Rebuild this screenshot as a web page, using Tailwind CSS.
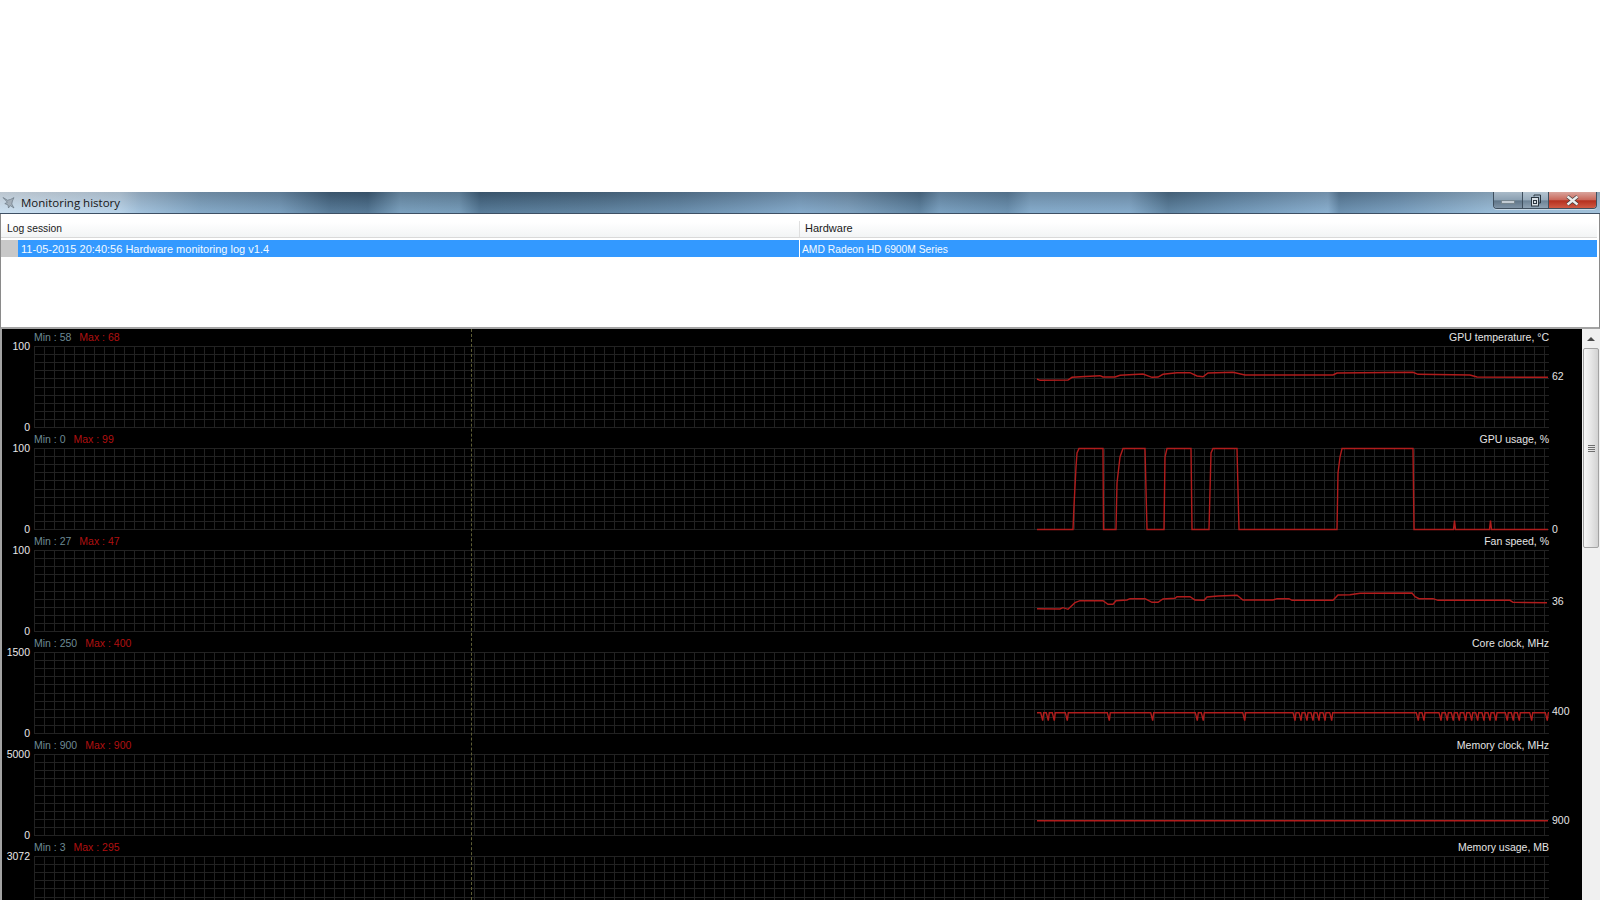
<!DOCTYPE html>
<html lang="en">
<head>
  <meta charset="UTF-8" />
  <meta name="viewport" content="width=device-width, initial-scale=1.0" />
  <title>Monitoring history</title>
  <script src="https://cdn.jsdelivr.net/npm/@tailwindcss/browser@4"></script>
</head>
<body class="bg-white h-[900px] overflow-hidden flex flex-col font-['Liberation_Sans',sans-serif] text-[10.5px]">
  <div class="h-[192px] shrink-0"></div>

  <!-- Title bar -->
  <header class="relative h-[22px] shrink-0 flex items-center border-b border-[#3e5064] bg-[linear-gradient(to_bottom,rgba(40,60,80,0.22),rgba(150,200,240,0.32)),linear-gradient(to_right,#e6edf3_0%,#c8d8e6_7.5%,#a8bfd3_8.8%,#7f9db6_12.5%,#6d8ca7_17.5%,#3f5b73_20.6%,#3a566e_23%,#6f8fa8_25%,#6a8aa3_28.7%,#3d5a72_30%,#4a677f_37.5%,#587690_42.5%,#7d9dba_50%,#7793ac_53%,#4c6a83_57.5%,#6f90ac_58.7%,#5d7d98_63%,#7fa0bc_64.4%,#7f9fbb_70.6%,#4a6880_73%,#6384a0_77%,#86a6c2_83%,#5b7a95_83.7%,#6f8fab_87.5%,#9ab6cc_93%,#a9c0d2_100%)]">
    <svg class="ml-[2px] mr-[6px] w-[13px] h-[13px]" viewBox="0 0 13 13" aria-hidden="true">
      <path d="M1 1.5 5.5 4.2 8.6 3.4 12 1.6 10.4 5 9.8 8 12 12 8.2 9.6 6.5 12 6 9 2.8 7.6 5.4 6.3Z" fill="#a3aeb8" stroke="#5f6d78" stroke-width=".6"/>
    </svg>
    <h1 class="font-['Open_Sans',sans-serif] text-[11.5px] text-[#161616]">Monitoring history</h1>

    <!-- Caption buttons -->
    <div class="absolute right-[3px] top-0 h-[17px] flex border border-t-0 border-[#3f4f5e] rounded-b-[4px] overflow-hidden shadow-[0_1px_0_rgba(255,255,255,0.45)]">
      <div class="w-[29px] flex items-center justify-center border-r border-[#3f4f5e] bg-[linear-gradient(to_bottom,#a9bac8,#8ba0b2_50%,#5f7588_55%,#7f93a5)]">
        <span class="w-[14px] h-[4px] mt-[3px] bg-[#c3ccd4] border border-[#77868f]"></span>
      </div>
      <div class="w-[26px] flex items-center justify-center border-r border-[#3f4f5e] bg-[linear-gradient(to_bottom,#b4c4d1,#98acbd_50%,#6d8396_55%,#8ea2b3)]">
        <svg class="w-[12px] h-[13px]" viewBox="0 0 12 13" aria-hidden="true">
          <path d="M4 2.5V1h6.5v8H9" fill="none" stroke="#2b3640"/>
          <rect x="1.5" y="3.5" width="7" height="8.5" fill="#d8dfe5" stroke="#2b3640"/>
          <rect x="3.5" y="6.5" width="3" height="3" fill="none" stroke="#2b3640"/>
        </svg>
      </div>
      <div class="w-[47px] flex items-center justify-center bg-[linear-gradient(to_bottom,#d9a49c,#c9695c_48%,#b5301f_55%,#cf5a44)]">
        <svg class="w-[13px] h-[11px]" viewBox="0 0 13 11" aria-hidden="true">
          <path d="M1.5 1.5 11.5 9.5M11.5 1.5 1.5 9.5" stroke="#3a3a3a" stroke-width="3.6"/>
          <path d="M1.5 1.5 11.5 9.5M11.5 1.5 1.5 9.5" stroke="#ececec" stroke-width="2.4"/>
        </svg>
      </div>
    </div>
  </header>

  <!-- Session list -->
  <section class="h-[115px] shrink-0 flex flex-col bg-white border-x border-[#8a8a8a] border-b-2 border-b-[#a3a3a3] pt-[8px] pr-[2px] text-[#1a1a1a]">
    <div class="h-[14px] flex items-center border-b border-[#d9d9d9] bg-[linear-gradient(to_bottom,#ffffff,#f2f4f5)] box-content pb-[1px]">
      <div class="w-[799px] pl-[6px] border-r border-[#dfdfdf] text-[10.3px]">Log session</div>
      <div class="pl-[5px] -mt-[1px] text-[11px]">Hardware</div>
    </div>
    <div class="mt-[2px] h-[17px] flex text-white">
      <div class="w-[17px] bg-[#c8c8c8]"></div>
      <div class="w-[782px] pl-[3px] pt-[1px] bg-[#3399ff] border-r border-white leading-[17px] text-[#f4f9ff] text-[11px]">11-05-2015 20:40:56 Hardware monitoring log v1.4</div>
      <div class="flex-1 pl-[2px] pt-[1px] bg-[#3399ff] leading-[17px] text-[#f4f9ff] text-[10.3px]">AMD Radeon HD 6900M Series</div>
    </div>
  </section>

  <!-- Graphs + scrollbar -->
  <div class="flex-1 min-h-0 flex overflow-hidden">
    <main id="graphs" class="relative w-[1582px] shrink-0 bg-black border-l-2 border-[#a3a3a3] overflow-hidden">
      <!-- history cursor -->
      <div class="absolute left-[469px] top-0 bottom-0 border-l border-dashed border-[#5c5c34] z-10"></div>
    </main>
    <aside class="flex-1 bg-[#f0f0f0] flex flex-col items-stretch">
      <div class="h-[19px] flex items-center justify-center">
        <span class="w-0 h-0 border-x-[4px] border-x-transparent border-b-[4px] border-b-[#4a4a4a]"></span>
      </div>
      <div class="h-[200px] mx-[1px] flex items-center justify-center rounded-[2px] border border-[#a3a3a3] bg-[linear-gradient(to_right,#f6f6f6,#e6e6e6_50%,#d2d2d2)]">
        <div class="flex flex-col gap-[1px]">
          <span class="block w-[7px] h-[1px] bg-[#6e6e6e]"></span>
          <span class="block w-[7px] h-[1px] bg-[#6e6e6e]"></span>
          <span class="block w-[7px] h-[1px] bg-[#6e6e6e]"></span>
          <span class="block w-[7px] h-[1px] bg-[#6e6e6e]"></span>
        </div>
      </div>
    </aside>
  </div>

  <script>
  // core clock drops a few pixels on every sample listed here
  const coreDips = [1042.7,1048.3,1054.3,1067.3,1109.3,1152.7,1197.3,1203.3,1244.7,1295,1301,1307,1313,1319,1325,1331.7,1418.3,1424,1441,1447.3,1453.3,1459.3,1465.7,1471.7,1477.7,1484,1490,1496,1507.3,1513.3,1519.3,1531.7,1547.3];
  let corePts = '1037,712.7';
  coreDips.forEach(x => {
    corePts += ` ${x - 2},712.7 ${x},720.7 ${x + 1},712.7`;
  });
  corePts += ' 1548,712.7';

  const rows = [
    { name: 'GPU temperature, °C', min: 58, max: 68, top: 100, value: 62, valueY: 377,
      points: '1037,379 1040,380.3 1068,380 1072,377.3 1085,376.5 1100,375.7 1103,377 1115,377 1120,375.3 1143,374 1152,377.3 1158,377 1163,374.3 1177,372.7 1190,372.7 1197,376 1203,376.7 1208,373 1233,372.3 1245,375 1333,375 1337,373 1413,372.3 1418,374.3 1470,375 1477,377 1548,377.3' },
    { name: 'GPU usage, %', min: 0, max: 99, top: 100, value: 0, valueY: 530,
      points: '1037,529.5 1073,529.5 1074,506 1076,467 1077,453 1079,448.5 1103,448.5 1103.5,529.5 1116,529.5 1117,483 1120,457 1123,448.5 1145,448.5 1146,490 1147,529.5 1164,529.5 1165,457 1167,448.5 1191,448.5 1192,529.5 1209,529.5 1211,453 1213,448.5 1237,448.5 1238,490 1239,529.5 1337,529.5 1338,473 1340,457 1342,448.5 1413,448.5 1414,529.5 1453.5,529.5 1454.5,520.5 1455.5,529.5 1489.5,529.5 1490.5,520.5 1491.5,529.5 1548,529.5' },
    { name: 'Fan speed, %', min: 27, max: 47, top: 100, value: 36, valueY: 602,
      points: '1037,608.7 1060,609 1063,607.7 1068,609.3 1075,602.7 1080,600.7 1103,600.7 1108,604.3 1113,604.3 1116,600.7 1127,600 1130,598.7 1145,598.7 1152,602.3 1158,602.3 1163,599 1175,598.3 1177,596.7 1190,596.7 1195,600 1204,600.3 1207,597 1218,596 1237,595.3 1243,600 1273,600 1277,598.7 1289,598.7 1292,600.3 1333,600.3 1338,595 1350,594.7 1360,593.3 1412,593 1415,596.7 1419,598.7 1433,598.7 1438,600.3 1510,600.3 1513,602.3 1547,602.7' },
    { name: 'Core clock, MHz', min: 250, max: 400, top: 1500, value: 400, valueY: 712, points: corePts },
    { name: 'Memory clock, MHz', min: 900, max: 900, top: 5000, value: 900, valueY: 821,
      points: '1037,820.7 1548,820.7' },
    // runs off the bottom of the window
    { name: 'Memory usage, MB', min: 3, max: 295, top: 3072, value: null, points: '' },
  ];

  const graphs = document.getElementById('graphs');

  rows.forEach((row, i) => {
    const plotTop = 346 + i * 102;

    // 10px by 8.1px grid
    let grid = '';
    for (let x = 34; x <= 1548; x += 10) grid += `M${x + 0.5} ${plotTop}v81.5`;
    for (let n = 0; n <= 10; n++) {
      const y = Math.round(plotTop + n * 8.1) + 0.5;
      grid += `M34 ${y}H1549`;
    }

    const value = row.value === null ? '' :
      `<span class="absolute left-full ml-[3px] -translate-y-1/2 text-[#e4e4e4]" style="top:${row.valueY - plotTop}px">${row.value}</span>`;
    const bottomLabel = row.value === null ? '' : '<span>0</span>';

    graphs.insertAdjacentHTML('beforeend', `
      <div class="h-[102px] flex flex-col">
        <div class="h-[17px] shrink-0 w-[1547px] pl-[32px] flex items-center justify-between">
          <div class="flex gap-[8px]">
            <span class="text-[#6d8a94]">Min : ${row.min}</span>
            <span class="text-[#b01010]">Max : ${row.max}</span>
          </div>
          <span class="text-[#e4e4e4]">${row.name}</span>
        </div>
        <div class="h-[82px] shrink-0 flex">
          <div class="w-[28px] shrink-0 -mt-[6px] h-[93px] flex flex-col justify-between items-end text-[#e8e8e8] leading-[12px]">
            <span>${row.top}</span>
            ${bottomLabel}
          </div>
          <div class="ml-[4px] relative w-[1515px] h-[82px]">
            <svg class="block w-[1515px] h-[82px] overflow-visible" viewBox="34 ${plotTop} 1515 82" aria-hidden="true">
              <path d="${grid}" fill="none" stroke="#222222" shape-rendering="crispEdges"/>
              <polyline points="${row.points}" fill="none" stroke="#b01c1c" stroke-width="1.4"/>
            </svg>
            ${value}
          </div>
        </div>
      </div>
    `);
  });
  </script>
</body>
</html>
